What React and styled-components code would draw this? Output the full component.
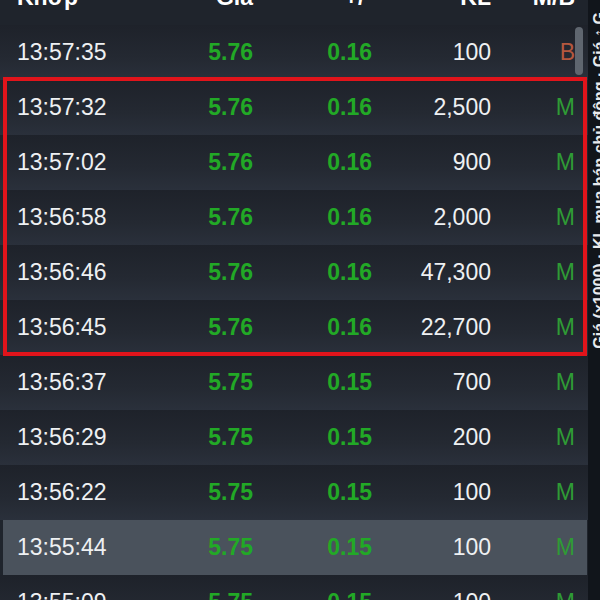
import React from 'react';
import styled, { createGlobalStyle } from 'styled-components';

const GlobalStyle = createGlobalStyle`
    html, body {
        margin: 0;
        padding: 0;
        background: #1f242c;
    }
    body {
        font-family: "Liberation Sans", Arial, sans-serif;
    }
`;

const Screen = styled.div`
    display: flex;
    width: 600px;
    height: 600px;
    overflow: hidden;
    background: #1f242c;
`;

const Board = styled.div`
    position: relative;
    width: 588px;
    flex-shrink: 0;
    margin-top: -30px;
`;

const Row = styled.div`
    display: grid;
    grid-template-columns: 120px 116px 119px 119px 84px;
    align-items: center;
    height: 55px;
    box-sizing: border-box;
    font-size: 23px;
    color: #eef0f2;
    background: ${p => p.$active
        ? '#4a525c'
        : 'linear-gradient(180deg, #1e222a 0%, #242932 60%, #2a303b 100%)'};
    margin: ${p => p.$active ? '0 1px 0 3px' : '0'};
    padding-left: ${p => p.$active ? '14px' : '17px'};
`;

const HeadRow = styled(Row)`
    font-weight: bold;
    color: #ffffff;
    background: #1f242c;
`;

const Cell = styled.span`
    text-align: ${p => p.$align || 'right'};
    white-space: nowrap;
`;

const Green = styled(Cell)`
    color: #22a926;
    font-weight: bold;
`;

const Side = styled(Cell)`
    color: ${p => p.$side === 'B' ? '#b4583e' : '#2f9b35'};
`;

const Marked = styled.div`
    position: relative;
    &::after {
        content: '';
        position: absolute;
        top: -3px;
        bottom: -1px;
        left: 3px;
        right: 1px;
        border: 4px solid #e1141b;
        pointer-events: none;
    }
`;

const Thumb = styled.div`
    position: absolute;
    top: 57px;
    right: 5px;
    width: 8px;
    height: 48px;
    border-radius: 4px;
    background: #5f666f;
`;

const Strip = styled.div`
    width: 12px;
    flex-shrink: 0;
    overflow: hidden;
    background: #11151b;
    padding-top: 12px;
`;

const StripText = styled.div`
    writing-mode: vertical-rl;
    transform: rotate(180deg);
    width: 20px;
    margin-left: 2px;
    font-size: 16px;
    font-weight: bold;
    color: #e8eaed;
    white-space: nowrap;
    line-height: 20px;
`;

const topRow = { time: '13:57:35', price: '5.76', change: '0.16', vol: '100', side: 'B' };

const marked = [
    { time: '13:57:32', price: '5.76', change: '0.16', vol: '2,500', side: 'M' },
    { time: '13:57:02', price: '5.76', change: '0.16', vol: '900', side: 'M' },
    { time: '13:56:58', price: '5.76', change: '0.16', vol: '2,000', side: 'M' },
    { time: '13:56:46', price: '5.76', change: '0.16', vol: '47,300', side: 'M' },
    { time: '13:56:45', price: '5.76', change: '0.16', vol: '22,700', side: 'M' },
];

const rest = [
    { time: '13:56:37', price: '5.75', change: '0.15', vol: '700', side: 'M' },
    { time: '13:56:29', price: '5.75', change: '0.15', vol: '200', side: 'M' },
    { time: '13:56:22', price: '5.75', change: '0.15', vol: '100', side: 'M' },
    { time: '13:55:44', price: '5.75', change: '0.15', vol: '100', side: 'M', active: true },
    { time: '13:55:09', price: '5.75', change: '0.15', vol: '100', side: 'M' },
];

const TradeRow = ({ t }) => (
    <Row $active={t.active}>
        <Cell $align="left">{t.time}</Cell>
        <Green>{t.price}</Green>
        <Green>{t.change}</Green>
        <Cell>{t.vol}</Cell>
        <Side $side={t.side}>{t.side}</Side>
    </Row>
);

export default function App() {
    return (
        <Screen>
            <GlobalStyle />
            <Board>
                <HeadRow>
                    <Cell $align="left">Khớp</Cell>
                    <Cell>Giá</Cell>
                    <Cell>+/-</Cell>
                    <Cell>KL</Cell>
                    <Cell>M/B</Cell>
                </HeadRow>
                <TradeRow t={topRow} />
                <Marked>
                    {marked.map(t => <TradeRow key={t.time} t={t} />)}
                </Marked>
                {rest.map(t => <TradeRow key={t.time} t={t} />)}
                <Thumb />
            </Board>
            <Strip>
                <StripText>Giá (x1000) · KL mua bán chủ động · Giá ↑ G</StripText>
            </Strip>
        </Screen>
    );
}
